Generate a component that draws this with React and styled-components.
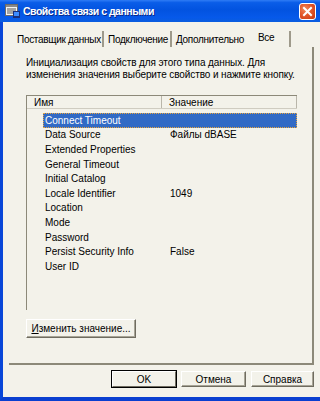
import styled, { createGlobalStyle } from 'styled-components';

const GlobalStyle = createGlobalStyle`
  html, body {
    margin: 0;
    padding: 0;
    background: #f3f2ea;
  }
  * {
    box-sizing: border-box;
  }
`;

const Window = styled.div`
  display: flex;
  flex-direction: column;
  width: 320px;
  height: 401px;
  overflow: hidden;
  font-family: "Liberation Sans", Arial, sans-serif;
  font-size: 10px;
  color: #000;
`;

const TitleBar = styled.div`
  display: flex;
  align-items: center;
  height: 22px;
  flex-shrink: 0;
  padding-left: 5px;
  padding-right: 4px;
  background: linear-gradient(180deg, #2f7cf5 0%, #0a5de8 12%, #0253e0 45%, #0659ea 80%, #0a5ddf 100%);

  h1 {
    flex: 1;
    margin: 0 0 0 3px;
    color: white;
    font-size: 10.5px;
    font-weight: bold;
    letter-spacing: -0.5px;
    text-shadow: 1px 1px 0 #0a2a8a;
    white-space: nowrap;
  }
`;

const CloseButton = styled.div`
  display: flex;
  justify-content: center;
  align-items: center;
  width: 17px;
  height: 17px;
  border: 1px solid white;
  border-radius: 3px;
  background: radial-gradient(circle at 35% 35%, #f08a5c 0%, #e2582b 45%, #c9370f 100%);
`;

const Body = styled.div`
  flex: 1;
  display: flex;
  flex-direction: column;
  padding: 9px 0 0 6px;
  border-left: 3px solid #0846d8;
  border-bottom: 4px solid #0a3fd0;
  background: #f3f2ea;
`;

const TabStrip = styled.div`
  display: flex;
  height: 16px;
  letter-spacing: -0.3px;
`;

const Tab = styled.div`
  display: flex;
  align-items: ${(p) => (p.active ? 'flex-start' : 'center')};
  width: ${(p) => p.width}px;
  padding-left: ${(p) => p.pad}px;
  padding-top: ${(p) => (p.active ? '1px' : '0')};
  white-space: nowrap;
  border-right: ${(p) => (p.sep ? '2px solid #9e9a8b' : 'none')};
`;

const Panel = styled.div`
  display: flex;
  flex-direction: column;
  align-items: flex-start;
  width: 305px;
  height: 318px;
  padding: 10px 0 0 17px;
  border-right: 2px solid #8c8979;
  border-bottom: 2px solid #8c8979;
`;

const Description = styled.p`
  margin: 0;
  line-height: 12px;
  letter-spacing: -0.1px;
  white-space: nowrap;
`;

const ListBox = styled.div`
  display: flex;
  flex-direction: column;
  width: 271px;
  height: 215px;
  margin-top: 14px;
  border-left: 1px solid #8c8979;
  border-top: 1px solid #8c8979;
`;

const HeaderRow = styled.div`
  display: flex;
  height: 13px;
  border-bottom: 1px solid #cfccc1;
`;

const HeaderCell = styled.div`
  display: flex;
  align-items: center;
  width: ${(p) => p.width}px;
  padding-left: ${(p) => p.pad}px;
  border-right: 1px solid #b9b6aa;
`;

const Rows = styled.div`
  display: flex;
  flex-direction: column;
  padding-top: 4px;
  padding-left: 16px;
`;

const Row = styled.div`
  display: flex;
  align-items: center;
  height: 14.6px;
  background: ${(p) => (p.selected ? '#316ac5' : 'transparent')};
  color: ${(p) => (p.selected ? 'white' : 'black')};
  outline: ${(p) => (p.selected ? '1px dotted #e9a43c' : 'none')};
  outline-offset: -1px;
`;

const NameCell = styled.span`
  width: 125px;
  padding-left: 2px;
  white-space: nowrap;
`;

const ValueCell = styled.span`
  padding-left: 2px;
  white-space: nowrap;
`;

const Button = styled.button`
  display: flex;
  justify-content: center;
  align-items: center;
  width: ${(p) => p.width}px;
  height: ${(p) => p.height}px;
  margin-top: ${(p) => p.top || 0}px;
  padding: 0;
  font-family: inherit;
  font-size: 10px;
  color: black;
  white-space: nowrap;
  background: #f3f2ea;
  border: 1px solid;
  border-color: #ffffff #6f6c60 #6f6c60 #ffffff;
  box-shadow: ${(p) => (p.isDefault ? '0 0 0 1px #000' : 'inset -1px -1px 0 #a7a496')};
  border-radius: 0;

  u {
    text-decoration: underline;
  }
`;

const ButtonRow = styled.div`
  display: flex;
  justify-content: flex-end;
  gap: 5px;
  width: 305px;
  margin-top: 6px;
`;

const rows = [
  ['Connect Timeout', ''],
  ['Data Source', 'Файлы dBASE'],
  ['Extended Properties', ''],
  ['General Timeout', ''],
  ['Initial Catalog', ''],
  ['Locale Identifier', '1049'],
  ['Location', ''],
  ['Mode', ''],
  ['Password', ''],
  ['Persist Security Info', 'False'],
  ['User ID', ''],
];

function AppIcon() {
  return (
    <svg width="15" height="14" viewBox="0 0 15 14">
      <rect x="0.5" y="0.5" width="12" height="11" fill="#f4f4f4" stroke="#6b6b6b" />
      <rect x="1" y="1" width="11" height="2" fill="#8a8a8a" />
      <line x1="2" y1="5" x2="11" y2="5" stroke="#555" />
      <line x1="2" y1="7" x2="11" y2="7" stroke="#555" />
      <line x1="2" y1="9" x2="8" y2="9" stroke="#555" />
      <rect x="8" y="7" width="7" height="7" fill="#1a2f7a" />
      <rect x="9" y="8" width="5" height="4" fill="#3d8cff" />
    </svg>
  );
}

function CloseIcon() {
  return (
    <svg width="11" height="11" viewBox="0 0 11 11">
      <path d="M2 2 L9 9 M9 2 L2 9" stroke="white" strokeWidth="2" strokeLinecap="square" />
    </svg>
  );
}

export default function App() {
  return (
    <>
      <GlobalStyle />
      <Window>
        <TitleBar>
          <AppIcon />
          <h1>Свойства связи с данными</h1>
          <CloseButton>
            <CloseIcon />
          </CloseButton>
        </TitleBar>
        <Body>
          <TabStrip>
            <Tab width={95} pad={8} sep>Поставщик данных</Tab>
            <Tab width={68} pad={4} sep>Подключение</Tab>
            <Tab width={78} pad={4}>Дополнительно</Tab>
            <Tab width={41} pad={8} active sep>Все</Tab>
          </TabStrip>
          <Panel>
            <Description>
              Инициализация свойств для этого типа данных. Для
              <br />
              изменения значения выберите свойство и нажмите кнопку.
            </Description>
            <ListBox>
              <HeaderRow>
                <HeaderCell width={135} pad={7}>Имя</HeaderCell>
                <HeaderCell width={135} pad={7}>Значение</HeaderCell>
              </HeaderRow>
              <Rows>
                {rows.map(([name, value], i) => (
                  <Row key={name} selected={i === 0}>
                    <NameCell>{name}</NameCell>
                    <ValueCell>{value}</ValueCell>
                  </Row>
                ))}
              </Rows>
            </ListBox>
            <Button width={110} height={19} top={9}>
              <span><u>И</u>зменить значение...</span>
            </Button>
          </Panel>
          <ButtonRow>
            <Button width={64} height={16} isDefault>OK</Button>
            <Button width={65} height={16}>Отмена</Button>
            <Button width={63} height={16}>Справка</Button>
          </ButtonRow>
        </Body>
      </Window>
    </>
  );
}
